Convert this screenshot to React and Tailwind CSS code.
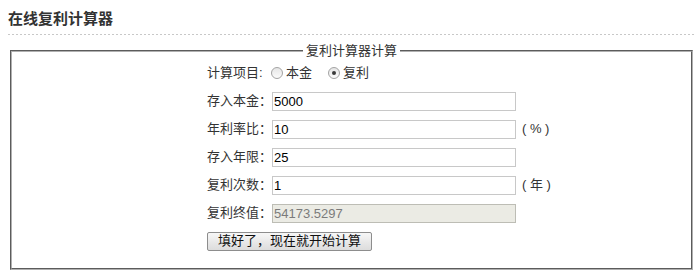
import React from "react";

function Radio({ checked }) {
  return (
    <span className="inline-flex items-center justify-center w-[12px] h-[12px] rounded-full border border-[#a3a3a3] bg-linear-to-b from-[#e6e6e6] to-[#fbfbfb] shrink-0">
      {checked ? <span className="w-[4px] h-[4px] rounded-full bg-[#3a3a3a]" /> : null}
    </span>
  );
}

function Row({ label, value, suffix, disabled }) {
  return (
    <div className="flex items-center h-[28px]">
      <span className="w-[65px] shrink-0">{label}</span>
      <input
        readOnly
        value={value}
        className={
          disabled
            ? "w-[244px] h-[19px] border border-[#bdbdb5] bg-[#ebebe4] px-[1px] text-[13px] text-[#7b7b7b] outline-none font-['Liberation_Sans',sans-serif]"
            : "w-[244px] h-[19px] border border-[#c8c8c8] bg-white px-[1px] text-[13px] text-black outline-none font-['Liberation_Sans',sans-serif]"
        }
      />
      {suffix ? <span className="ml-[6px] text-[#333]">{suffix}</span> : null}
    </div>
  );
}

export default function App() {
  return (
    <div className="w-[700px] h-[273px] overflow-hidden bg-white text-[#333] font-['Liberation_Sans','Noto_Sans_CJK_SC',sans-serif]">
      <div className="pl-2 pt-[9px] text-[15px] font-bold leading-[20px] text-[#333]">在线复利计算器</div>
      <div className="mt-[5px] ml-2 mr-[5px] h-px bg-[repeating-linear-gradient(to_right,#c8c8c8_0_2px,transparent_2px_4px)]" />
      <fieldset className="mt-2 ml-[10px] mr-[7px] border-2 [border-style:groove] border-[#b0b0b0] pb-[13px] text-[13px] leading-[16px]">
        <legend className="mx-auto px-[3px] text-[13px] leading-[16px] text-[#333]">复利计算器计算</legend>
        <div className="pl-[195px]">
          <div className="flex items-center h-[28px]">
            <span className="w-[64px] shrink-0">计算项目:</span>
            <Radio />
            <span className="ml-[3px]">本金</span>
            <span className="ml-[16px] flex items-center">
              <Radio checked />
              <span className="ml-[3px]">复利</span>
            </span>
          </div>
          <Row label="存入本金：" value="5000" />
          <Row label="年利率比：" value="10" suffix="( % )" />
          <Row label="存入年限：" value="25" />
          <Row label="复利次数：" value="1" suffix="( 年 )" />
          <Row label="复利终值：" value="54173.5297" disabled />
          <div className="flex items-center h-[28px]">
            <button className="w-[165px] h-[19px] border border-[#8d8d8d] rounded-[2px] bg-linear-to-b from-[#f7f7f7] to-[#dcdcdc] text-[13px] leading-[16px] text-[#111]">
              填好了，现在就开始计算
            </button>
          </div>
        </div>
      </fieldset>
    </div>
  );
}
